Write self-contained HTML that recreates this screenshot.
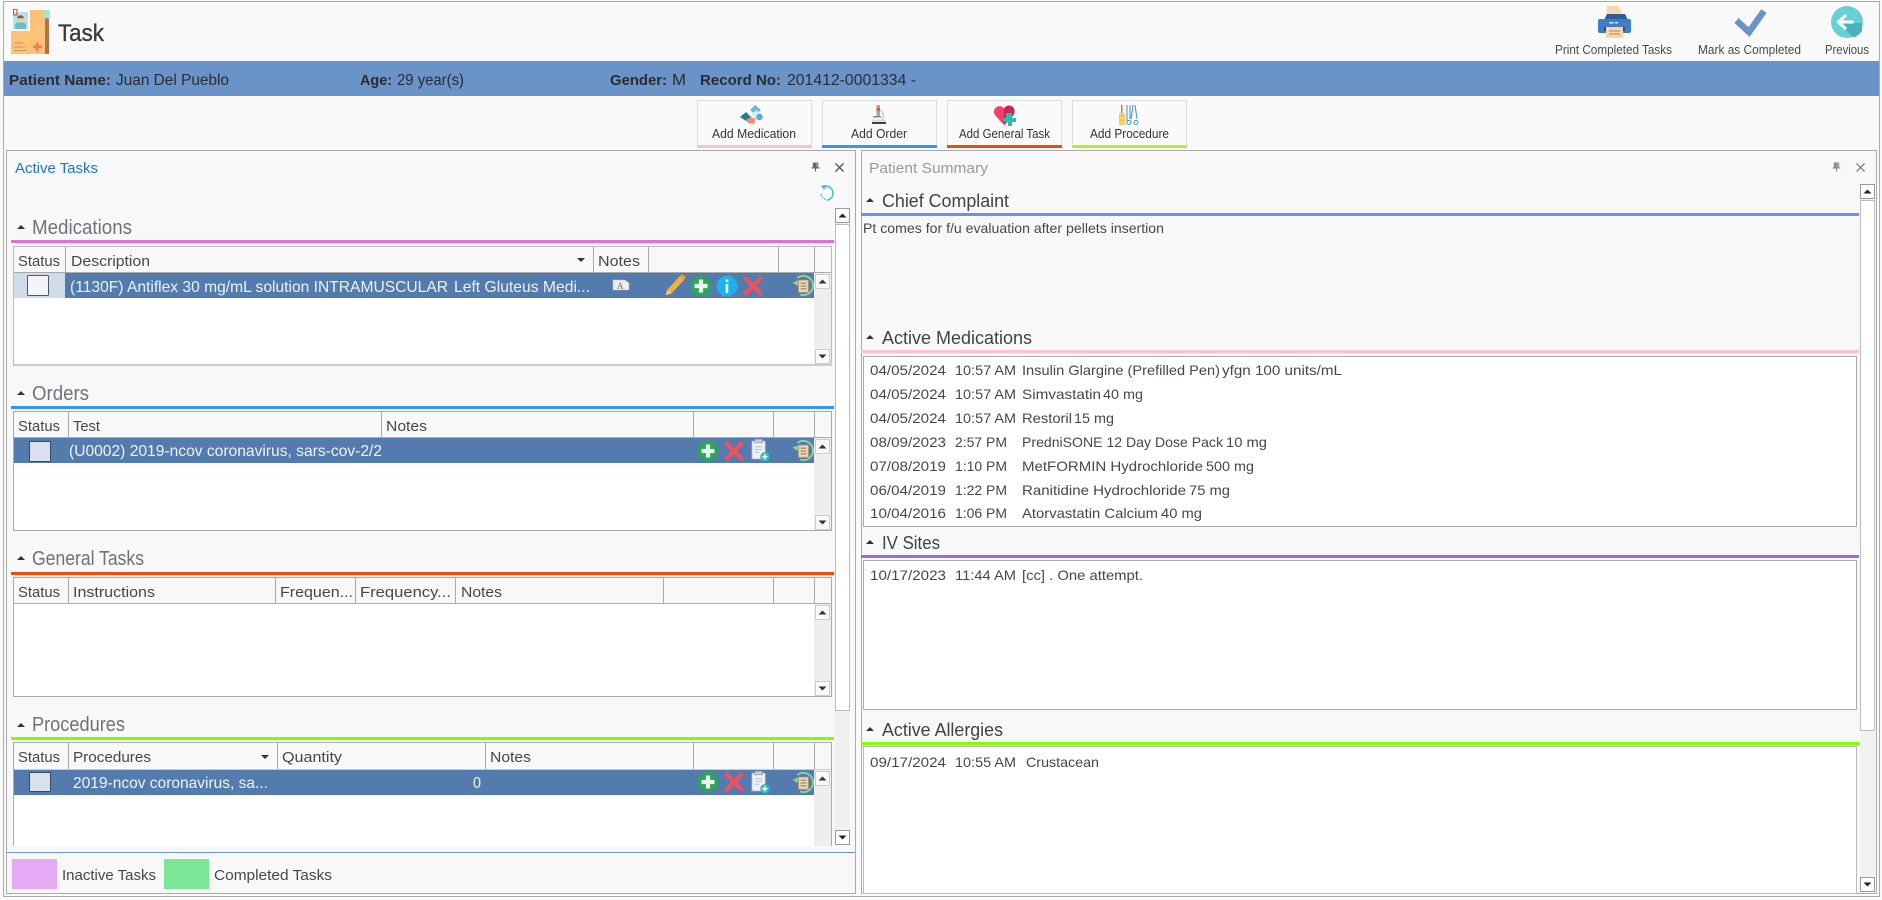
<!DOCTYPE html>
<html lang="en">
<head>
<meta charset="utf-8">
<title>Task</title>
<style>
html,body{margin:0;padding:0;background:#f9f9f9;width:1882px;height:900px;overflow:hidden}
svg{display:block;position:absolute;left:0;top:0}
text{font-family:"Liberation Sans",sans-serif;fill:#3d3d3d;font-size:15px;white-space:pre}
.b{font-weight:bold}
.sec{font-size:20px;fill:#6d7279}
.rs{font-size:18px;fill:#3f4347}
.g{font-size:15px;fill:#44484c}
.r{font-size:16px;fill:#eef3f9}
.s{font-size:14px;fill:#44484c}
.tb{font-size:12.5px;fill:#4a4a4a}
.bt{font-size:13px;fill:#333}
.l{stroke:#aaa;stroke-width:1;fill:none;shape-rendering:crispEdges}
.c{shape-rendering:crispEdges}
</style>
</head>
<body>
<svg width="1882" height="900" viewBox="0 0 1882 900" xmlns="http://www.w3.org/2000/svg">
<defs>
<symbol id="plus" viewBox="0 0 22 22"><circle cx="11" cy="11" r="10.5" fill="#2fa35c"/><path d="M11 4.5v13M4.500 11h13" stroke="#e8f5ee" stroke-width="4.200"/></symbol>
<symbol id="xx" viewBox="0 0 22 22"><path d="M2.500 2.500L19.500 19.500M19.500 2.500L2.500 19.500" stroke="#f2505f" stroke-width="4.200" fill="none"/></symbol>
<symbol id="info" viewBox="0 0 22 22"><circle cx="11" cy="11" r="10.500" fill="#1fb0ef"/><rect x="9.700" y="9" width="2.600" height="9" fill="#eaf7fd"/><rect x="9.700" y="4.500" width="2.600" height="2.600" fill="#eaf7fd"/></symbol>
<symbol id="hist" viewBox="0 0 24 24"><path d="M6.600 4.300A10 10 0 1 1 9.600 21.400" fill="none" stroke="#8fd68a" stroke-width="2"/><path d="M1.500 9L7.500 6.500 7 12.500z" fill="#8fd68a"/><rect x="8" y="6.500" width="10" height="12.500" fill="#f4d6a9" stroke="#c9a878" stroke-width=".8"/><path d="M10 9.500h6M10 12.500h6M10 15.500h6" stroke="#7a7a70" stroke-width="1"/></symbol>
<symbol id="clip" viewBox="0 0 20 24"><rect x="1" y="2" width="14" height="19" rx="1" fill="#eef1f5" stroke="#aab4c0" stroke-width=".8"/><rect x="4" y="0" width="8" height="4" fill="#c9ced6" stroke="#7f8791" stroke-width=".6"/><path d="M4 8h8M4 11h8M4 14h5" stroke="#c5ccd4" stroke-width="1.300"/><circle cx="14.500" cy="18.500" r="4.800" fill="#2cc2c6"/><path d="M14.500 15.800v5.400M11.800 18.500h5.400" stroke="#fff" stroke-width="1.500"/></symbol>
<symbol id="up" viewBox="0 0 15 15"><rect x=".5" y=".5" width="14" height="14" fill="#f9f9f9" stroke="#ccc"/><path d="M3.500 9.500L7.500 5.500 11.500 9.500z" fill="#333"/></symbol>
<symbol id="dn" viewBox="0 0 15 15"><rect x=".5" y=".5" width="14" height="14" fill="#f9f9f9" stroke="#ccc"/><path d="M3.500 5.500L7.500 9.500 11.500 5.500z" fill="#333"/></symbol>
<symbol id="oup" viewBox="0 0 15 15"><rect x=".5" y=".5" width="14" height="14" fill="#fff" stroke="#999"/><path d="M3.500 9.500L7.500 5.500 11.500 9.500z" fill="#222"/></symbol>
<symbol id="odn" viewBox="0 0 15 15"><rect x=".5" y=".5" width="14" height="14" fill="#fff" stroke="#999"/><path d="M3.500 5.500L7.500 9.500 11.500 5.500z" fill="#222"/></symbol>
<symbol id="pin" viewBox="0 0 10 10"><path d="M2 0h6v5.500H2zM0.500 5.500h9v1.200h-9zM4.400 6.500h1.200V10H4.400z" fill="#666"/><rect x="5.800" y="0.500" width="1.300" height="4.500" fill="#aaa"/></symbol>
<symbol id="cls" viewBox="0 0 10 10"><path d="M.5 .5L9.500 9.500M9.500 .5L.5 9.500" stroke="#444" stroke-width="1.300" fill="none"/></symbol>
</defs>

<!-- frame -->
<rect width="1882" height="900" fill="#f9f9f9"/>
<rect class="l" x="3.500" y="1.500" width="1876" height="895" stroke-width="1.500"/>

<!-- title -->
<rect x="11" y="10" width="38" height="44" fill="#fdc177"/>
<rect x="45" y="14" width="4" height="40" fill="#a9764a"/>
<path d="M44 10h6v10l-3-2-3 1z" fill="#a8e2dc"/>
<rect x="11" y="9" width="19" height="22" fill="#fff"/>
<rect x="13" y="12" width="15" height="17" fill="#aee6ea"/>
<circle cx="20.500" cy="19" r="3" fill="#f7cf9f"/><path d="M20.500 15.300a3.500 3.500 0 0 1 3.500 3h-7a3.500 3.500 0 0 1 3.500-3z" fill="#8a5a3a"/>
<path d="M15 29v-3.500a3 3 0 0 1 3-3h5a3 3 0 0 1 3 3V29z" fill="#6fbcc6"/>
<rect x="13.500" y="9.500" width="3.500" height="5.500" fill="none" stroke="#f0543c" stroke-width="1.200"/>
<path d="M14 43h9M14 47h11M14 50.500h12" stroke="#c69a5f" stroke-width="1" class="c"/>
<path d="M33 45.500h3v-3h2.500v3h3.500v2.500h-3.500v3H36v-3h-3z" fill="#f47a4c"/>
<text x="58" y="41" style="font-size:24px;fill:#3a3a3a;stroke:#3a3a3a;stroke-width:.35" textLength="46" lengthAdjust="spacingAndGlyphs">Task</text>

<!-- top-right actions -->
<path d="M1607 6h11l3 4v10h-14z" fill="#fbd6a8"/>
<path d="M1604 20l3-6h18l3 6z" fill="#2d5e96"/>
<rect x="1598" y="19" width="33" height="14" rx="2" fill="#3f7ec6"/>
<rect x="1604" y="27" width="21" height="4" fill="#234e80"/>
<rect x="1606" y="27" width="17" height="11" fill="#fbd6a8"/>
<path d="M1609 31h11M1609 34h11" stroke="#a58a63" stroke-width="1"/>
<rect x="1609" y="22" width="5" height="1.500" fill="#cfe0f3"/><rect x="1615" y="22" width="3" height="1.500" fill="#cfe0f3"/>
<text class="tb" x="1555" y="54" textLength="117" lengthAdjust="spacingAndGlyphs">Print Completed Tasks</text>
<path d="M1736.500 20.500L1749 32 1764 11" stroke="#6a94c8" stroke-width="6.500" fill="none"/>
<text class="tb" x="1698" y="54" textLength="103" lengthAdjust="spacingAndGlyphs">Mark as Completed</text>
<circle cx="1847" cy="22" r="16" fill="#66cfd8"/>
<path d="M1839 23l23 0-0 8a16 16 0 0 1-9 6.500z" fill="#4cb1be"/>
<path d="M1846 15l-7.500 7 7.500 7M1839.500 22h14" stroke="#fff" stroke-width="3" fill="none"/>
<text class="tb" x="1825" y="54" textLength="44" lengthAdjust="spacingAndGlyphs">Previous</text>

<!-- patient bar -->
<rect class="c" x="4" y="61" width="1875" height="35" fill="#6a93c7"/>
<g style="fill:#2f3033">
<text class="b" x="9" y="85" style="fill:#2b2c30" textLength="102" lengthAdjust="spacingAndGlyphs">Patient Name:</text>
<text x="116" y="85" style="font-size:15.500px;fill:#2b2c30" textLength="113" lengthAdjust="spacingAndGlyphs">Juan Del Pueblo</text>
<text class="b" x="360" y="85" style="fill:#2b2c30" textLength="32" lengthAdjust="spacingAndGlyphs">Age:</text>
<text x="397" y="85" style="font-size:15.500px;fill:#2b2c30" textLength="67" lengthAdjust="spacingAndGlyphs">29 year(s)</text>
<text class="b" x="610" y="85" style="fill:#2b2c30" textLength="57" lengthAdjust="spacingAndGlyphs">Gender:</text>
<text x="672" y="85" style="font-size:15.500px;fill:#2b2c30" textLength="14" lengthAdjust="spacingAndGlyphs">M</text>
<text class="b" x="700" y="85" style="fill:#2b2c30" textLength="81" lengthAdjust="spacingAndGlyphs">Record No:</text>
<text x="787" y="85" style="font-size:15.500px;fill:#2b2c30" textLength="129" lengthAdjust="spacingAndGlyphs">201412-0001334 -</text>
</g>

<!-- add buttons -->
<g class="c">
<rect x="697.500" y="100.500" width="114" height="47" fill="#fafafa" stroke="#ddd"/><rect x="697" y="145" width="115" height="3" fill="#f9c1cc"/>
<rect x="822.500" y="100.500" width="114" height="47" fill="#fafafa" stroke="#ddd"/><rect x="822" y="145" width="115" height="3" fill="#3a96f5"/>
<rect x="947.500" y="100.500" width="114" height="47" fill="#fafafa" stroke="#ddd"/><rect x="947" y="145" width="115" height="3" fill="#f2490b"/>
<rect x="1072.500" y="100.500" width="114" height="47" fill="#fafafa" stroke="#ddd"/><rect x="1072" y="145" width="115" height="3" fill="#aef22a"/>
</g>
<text class="bt" x="712" y="138" textLength="84" lengthAdjust="spacingAndGlyphs">Add Medication</text>
<text class="bt" x="851" y="138" textLength="56" lengthAdjust="spacingAndGlyphs">Add Order</text>
<text class="bt" x="959" y="138" textLength="91" lengthAdjust="spacingAndGlyphs">Add General Task</text>
<text class="bt" x="1090" y="138" textLength="79" lengthAdjust="spacingAndGlyphs">Add Procedure</text>
<!-- pills -->
<path d="M750 110l5-5 6 5-5 5z" fill="#6ab7e8"/><path d="M751 114l6-4 6 6-6 4z" fill="#cdecf3"/>
<path d="M746 112l5 5-5 4-6-4z" fill="#1f7f8c"/><path d="M751 117l5 2-2 5-6-1-2-3z" fill="#f08f6d"/><circle cx="759.500" cy="117" r="3.200" fill="#5ba6dd"/>
<!-- microscope -->
<rect x="872" y="122" width="14" height="2" fill="#444"/><rect x="872" y="119.500" width="14" height="2.500" fill="#e8dcd3"/>
<path d="M880 110a7 7 0 0 1 2 10" stroke="#c9c9c9" stroke-width="1.500" fill="none"/>
<rect x="876.500" y="105" width="3.500" height="11" fill="#a8a8a8"/><rect x="876.500" y="108" width="3.500" height="3" fill="#d8553f"/>
<rect x="873" y="116" width="8" height="1.500" fill="#888"/>
<!-- heart -->
<path d="M1004 125l-9-10a5.500 5.500 0 0 1 9-6.500a5.500 5.500 0 0 1 10 5l-3 5z" fill="#f43f6b"/>
<path d="M1004 109a5.500 5.500 0 0 1 10 5l-3 5-7 6z" fill="#c7245f"/>
<path d="M1006 113h4v-0h2v5h4v4h-4v4h-4v-4h-4v-4h2z" fill="#29bfae"/>
<!-- procedure -->
<rect x="1121" y="105" width="1.500" height="8" fill="#e46a6a"/><rect x="1119" y="113" width="6" height="12" fill="#f7d06a"/>
<path d="M1119 116h6M1119 120h6" stroke="#e3b44a" stroke-width=".8"/>
<path d="M1127 105v16M1130 105v14M1133 105l-2 14M1135 105l2 14" stroke="#3f93c9" stroke-width="1" fill="none"/>
<circle cx="1129" cy="122.500" r="2" fill="none" stroke="#3f93c9"/><circle cx="1136" cy="122.500" r="2" fill="none" stroke="#3f93c9"/>

<!-- left panel -->
<rect class="l" x="6.500" y="150.500" width="849" height="743" style="fill:#f8f8f8"/>
<text x="15" y="173" style="font-size:14.500px;fill:#1d76c8" textLength="83" lengthAdjust="spacingAndGlyphs">Active Tasks</text>
<use href="#pin" x="811" y="162" width="9" height="10"/>
<use href="#cls" x="835" y="163" width="9" height="9"/>
<path d="M824 186.500A7 7 0 1 1 828 200" stroke="#4db4f0" stroke-width="1.500" fill="none"/>
<path d="M828 200A7 7 0 0 1 821 193" stroke="#4db4f0" stroke-width="1.500" fill="none" stroke-dasharray="1.500 1.200"/>
<path d="M821 185.500l6-.5-3 5z" fill="#4db4f0"/>

<!-- left outer scroll -->
<rect class="c" x="835" y="208" width="15" height="637" fill="#f0f0f0"/>
<rect x="835.500" y="224.500" width="14" height="486" fill="#fff" stroke="#bbb" class="c"/>
<use href="#oup" x="835" y="208" width="15" height="15"/>
<use href="#odn" x="835" y="830" width="15" height="15"/>

<!-- Medications -->
<path d="M17 229l4-4 4 4z" fill="#333"/>
<text class="sec" x="32" y="234" textLength="100" lengthAdjust="spacingAndGlyphs">Medications</text>
<rect class="c" x="11" y="240" width="823" height="3" fill="#e070d8"/>
<rect x="13.500" y="246.500" width="818" height="119" fill="#fff" stroke="#bbb" class="c"/>
<rect class="c" x="14" y="364" width="818" height="2" fill="#ccc"/>
<rect class="c" x="14" y="247" width="817" height="25" fill="#f8f8f8"/>
<path class="l" d="M65.500 247v25M593.500 247v25M648.500 247v25M778.500 247v25M814.500 247v25"/>
<rect class="c" x="14" y="272" width="817" height="1" fill="#aaa"/>
<rect class="c" x="814" y="273" width="17" height="91" fill="#eee"/>
<text class="g" x="18" y="266" textLength="42" lengthAdjust="spacingAndGlyphs">Status</text>
<text class="g" x="71" y="266" textLength="79" lengthAdjust="spacingAndGlyphs">Description</text>
<path d="M577 258h8l-4 4z" fill="#333"/>
<text class="g" x="598" y="266" textLength="42" lengthAdjust="spacingAndGlyphs">Notes</text>
<rect class="c" x="14" y="273" width="51" height="25" fill="#cfdcea"/>
<rect class="c" x="65" y="273" width="749" height="25" fill="#537bae"/>
<rect x="27.500" y="275.500" width="21" height="20" rx="1" fill="#f3f5f8" stroke="#555"/>
<text class="r" x="70" y="292" textLength="378" lengthAdjust="spacingAndGlyphs">(1130F) Antiflex 30 mg/mL solution INTRAMUSCULAR</text>
<text class="r" x="454" y="292" textLength="136" lengthAdjust="spacingAndGlyphs">Left Gluteus Medi...</text>
<path d="M613 280h12l4 3v7h-16z" fill="#eee" stroke="#bbb" stroke-width=".6"/>
<text x="617" y="289" style="font-family:'Liberation Serif',serif;font-size:9px;fill:#777">A</text>
<path d="M666 295l1-5 13-14 4 4-13 14z" fill="#f2b33d"/><path d="M666 295l1-5 4 3z" fill="#f0c9a0"/><path d="M680 276l2-2 4 3-2 3z" fill="#e89a2c"/>
<use href="#plus" x="690" y="275" width="22" height="22"/>
<use href="#info" x="716" y="275" width="22" height="22"/>
<use href="#xx" x="742" y="275" width="22" height="22"/>
<use href="#hist" x="791" y="274" width="23" height="23"/>
<use href="#up" x="815" y="274" width="15" height="15"/>
<use href="#dn" x="815" y="349" width="15" height="15"/>

<!-- Orders -->
<path d="M17 395l4-4 4 4z" fill="#333"/>
<text class="sec" x="32" y="400" textLength="57" lengthAdjust="spacingAndGlyphs">Orders</text>
<rect class="c" x="11" y="406" width="823" height="3" fill="#3a96f5"/>
<rect x="13.500" y="411.500" width="818" height="119" fill="#fff" stroke="#aaa" class="c"/>
<rect class="c" x="14" y="412" width="817" height="25" fill="#f8f8f8"/>
<path class="l" d="M68.500 412v25M381.500 412v25M693.500 412v25M773.500 412v25M814.500 412v25"/>
<rect class="c" x="14" y="437" width="817" height="1" fill="#aaa"/>
<rect class="c" x="814" y="438" width="17" height="92" fill="#eee"/>
<text class="g" x="18" y="431" textLength="42" lengthAdjust="spacingAndGlyphs">Status</text>
<text class="g" x="73" y="431" textLength="27" lengthAdjust="spacingAndGlyphs">Test</text>
<text class="g" x="386" y="431" textLength="41" lengthAdjust="spacingAndGlyphs">Notes</text>
<rect class="c" x="14" y="438" width="800" height="25" fill="#537bae"/>
<rect x="29.500" y="441.500" width="21" height="20" rx="1" fill="#d9e2ec" stroke="#3c4a5c"/>
<text class="r" x="69" y="456" textLength="313" lengthAdjust="spacingAndGlyphs">(U0002) 2019-ncov coronavirus, sars-cov-2/2</text>
<use href="#plus" x="697" y="440" width="22" height="22"/>
<use href="#xx" x="723" y="440" width="22" height="22"/>
<use href="#clip" x="751" y="439" width="19" height="23"/>
<use href="#hist" x="791" y="439" width="23" height="23"/>
<use href="#up" x="815" y="439" width="15" height="15"/>
<use href="#dn" x="815" y="515" width="15" height="15"/>

<!-- General Tasks -->
<path d="M17 560l4-4 4 4z" fill="#333"/>
<text class="sec" x="32" y="565" textLength="112" lengthAdjust="spacingAndGlyphs">General Tasks</text>
<rect class="c" x="11" y="572" width="823" height="3" fill="#f2490b"/>
<rect x="13.500" y="577.500" width="818" height="119" fill="#fff" stroke="#aaa" class="c"/>
<rect class="c" x="14" y="578" width="817" height="25" fill="#f8f8f8"/>
<path class="l" d="M68.500 578v25M275.500 578v25M355.500 578v25M455.500 578v25M663.500 578v25M773.500 578v25M814.500 578v25"/>
<rect class="c" x="14" y="603" width="817" height="1" fill="#aaa"/>
<rect class="c" x="814" y="604" width="17" height="92" fill="#eee"/>
<text class="g" x="18" y="597" textLength="42" lengthAdjust="spacingAndGlyphs">Status</text>
<text class="g" x="73" y="597" textLength="82" lengthAdjust="spacingAndGlyphs">Instructions</text>
<text class="g" x="280" y="597" textLength="73" lengthAdjust="spacingAndGlyphs">Frequen...</text>
<text class="g" x="360" y="597" textLength="91" lengthAdjust="spacingAndGlyphs">Frequency...</text>
<text class="g" x="461" y="597" textLength="41" lengthAdjust="spacingAndGlyphs">Notes</text>
<use href="#up" x="815" y="605" width="15" height="15"/>
<use href="#dn" x="815" y="681" width="15" height="15"/>

<!-- Procedures -->
<path d="M17 727l4-4 4 4z" fill="#333"/>
<text class="sec" x="32" y="731" textLength="93" lengthAdjust="spacingAndGlyphs">Procedures</text>
<rect class="c" x="11" y="737" width="823" height="3" fill="#80ff00"/>
<rect class="c" x="13" y="742" width="819" height="104" fill="#fff"/>
<path class="l" d="M13.500 846V742.500H831.500V846"/>
<rect class="c" x="14" y="743" width="817" height="26" fill="#f8f8f8"/>
<path class="l" d="M68.500 743v26M277.500 743v26M485.500 743v26M693.500 743v26M773.500 743v26M814.500 743v26"/>
<rect class="c" x="14" y="769" width="817" height="1" fill="#ccc"/>
<rect class="c" x="814" y="770" width="17" height="76" fill="#eee"/>
<text class="g" x="18" y="762" textLength="42" lengthAdjust="spacingAndGlyphs">Status</text>
<text class="g" x="73" y="762" textLength="78" lengthAdjust="spacingAndGlyphs">Procedures</text>
<path d="M261 755h8l-4 4z" fill="#333"/>
<text class="g" x="282" y="762" textLength="60" lengthAdjust="spacingAndGlyphs">Quantity</text>
<text class="g" x="490" y="762" textLength="41" lengthAdjust="spacingAndGlyphs">Notes</text>
<rect class="c" x="14" y="770" width="800" height="25" fill="#537bae"/>
<rect x="29.500" y="772.500" width="21" height="19" rx="1" fill="#d9e2ec" stroke="#3c4a5c"/>
<text class="r" x="73" y="788" textLength="195" lengthAdjust="spacingAndGlyphs">2019-ncov coronavirus, sa...</text>
<text class="r" x="473" y="788" textLength="8" lengthAdjust="spacingAndGlyphs">0</text>
<use href="#plus" x="697" y="771" width="22" height="22"/>
<use href="#xx" x="723" y="771" width="22" height="22"/>
<use href="#clip" x="751" y="771" width="19" height="23"/>
<use href="#hist" x="791" y="771" width="23" height="23"/>
<use href="#up" x="815" y="771" width="15" height="15"/>

<!-- legend -->
<rect class="c" x="7" y="852" width="848" height="1" fill="#6a97c9"/>
<rect class="c" x="12" y="859" width="45" height="30" fill="#e5aaf5"/>
<text class="g" x="62" y="880" textLength="94" lengthAdjust="spacingAndGlyphs">Inactive Tasks</text>
<rect class="c" x="164" y="859" width="45" height="30" fill="#7be695"/>
<text class="g" x="214" y="880" textLength="118" lengthAdjust="spacingAndGlyphs">Completed Tasks</text>

<!-- right panel -->
<rect class="l" x="861.500" y="150.500" width="1015" height="743" style="fill:#f8f8f8"/>
<text x="869" y="173" style="font-size:14.500px;fill:#9a9a9a" textLength="119" lengthAdjust="spacingAndGlyphs">Patient Summary</text>
<use href="#pin" x="1832" y="162" width="9" height="10" opacity=".75"/>
<use href="#cls" x="1856" y="163" width="9" height="9" opacity=".7"/>
<rect class="c" x="1860" y="184" width="15" height="708" fill="#f2f2f2"/>
<rect x="1860.500" y="200.500" width="14" height="530" fill="#fff" stroke="#bbb" class="c"/>
<use href="#oup" x="1860" y="184" width="15" height="15"/>
<use href="#odn" x="1860" y="877" width="15" height="15"/>

<path d="M866 202l4-4 4 4z" fill="#333"/>
<text class="rs" x="882" y="207" textLength="127" lengthAdjust="spacingAndGlyphs">Chief Complaint</text>
<rect class="c" x="861" y="213" width="998" height="3" fill="#6495ed"/>
<text class="s" x="863" y="233" textLength="301" lengthAdjust="spacingAndGlyphs">Pt comes for f/u evaluation after pellets insertion</text>

<path d="M866 339l4-4 4 4z" fill="#333"/>
<text class="rs" x="882" y="344" textLength="150" lengthAdjust="spacingAndGlyphs">Active Medications</text>
<rect class="c" x="861" y="350" width="998" height="3" fill="#ffc0cb"/>
<rect x="863.500" y="356.500" width="993" height="170" fill="#fff" stroke="#aaa" class="c"/>
<text class="s" x="870" y="375" textLength="76" lengthAdjust="spacingAndGlyphs">04/05/2024</text><text class="s" x="955" y="375" textLength="61" lengthAdjust="spacingAndGlyphs">10:57 AM</text><text class="s" x="1022" y="375" textLength="198" lengthAdjust="spacingAndGlyphs">Insulin Glargine (Prefilled Pen)</text><text class="s" x="1222" y="375" textLength="120" lengthAdjust="spacingAndGlyphs">yfgn 100 units/mL</text>
<text class="s" x="870" y="399" textLength="76" lengthAdjust="spacingAndGlyphs">04/05/2024</text><text class="s" x="955" y="399" textLength="61" lengthAdjust="spacingAndGlyphs">10:57 AM</text><text class="s" x="1022" y="399" textLength="79" lengthAdjust="spacingAndGlyphs">Simvastatin</text><text class="s" x="1103" y="399" textLength="40" lengthAdjust="spacingAndGlyphs">40 mg</text>
<text class="s" x="870" y="423" textLength="76" lengthAdjust="spacingAndGlyphs">04/05/2024</text><text class="s" x="955" y="423" textLength="61" lengthAdjust="spacingAndGlyphs">10:57 AM</text><text class="s" x="1022" y="423" textLength="50" lengthAdjust="spacingAndGlyphs">Restoril</text><text class="s" x="1074" y="423" textLength="40" lengthAdjust="spacingAndGlyphs">15 mg</text>
<text class="s" x="870" y="447" textLength="76" lengthAdjust="spacingAndGlyphs">08/09/2023</text><text class="s" x="955" y="447" textLength="52" lengthAdjust="spacingAndGlyphs">2:57 PM</text><text class="s" x="1022" y="447" textLength="201" lengthAdjust="spacingAndGlyphs">PredniSONE 12 Day Dose Pack</text><text class="s" x="1226" y="447" textLength="41" lengthAdjust="spacingAndGlyphs">10 mg</text>
<text class="s" x="870" y="471" textLength="76" lengthAdjust="spacingAndGlyphs">07/08/2019</text><text class="s" x="955" y="471" textLength="52" lengthAdjust="spacingAndGlyphs">1:10 PM</text><text class="s" x="1022" y="471" textLength="181" lengthAdjust="spacingAndGlyphs">MetFORMIN Hydrochloride</text><text class="s" x="1206" y="471" textLength="48" lengthAdjust="spacingAndGlyphs">500 mg</text>
<text class="s" x="870" y="495" textLength="76" lengthAdjust="spacingAndGlyphs">06/04/2019</text><text class="s" x="955" y="495" textLength="52" lengthAdjust="spacingAndGlyphs">1:22 PM</text><text class="s" x="1022" y="495" textLength="164" lengthAdjust="spacingAndGlyphs">Ranitidine Hydrochloride</text><text class="s" x="1189" y="495" textLength="41" lengthAdjust="spacingAndGlyphs">75 mg</text>
<text class="s" x="870" y="518" textLength="76" lengthAdjust="spacingAndGlyphs">10/04/2016</text><text class="s" x="955" y="518" textLength="52" lengthAdjust="spacingAndGlyphs">1:06 PM</text><text class="s" x="1022" y="518" textLength="136" lengthAdjust="spacingAndGlyphs">Atorvastatin Calcium</text><text class="s" x="1161" y="518" textLength="41" lengthAdjust="spacingAndGlyphs">40 mg</text>

<path d="M866 544l4-4 4 4z" fill="#333"/>
<text class="rs" x="882" y="549" textLength="58" lengthAdjust="spacingAndGlyphs">IV Sites</text>
<rect class="c" x="861" y="555" width="998" height="3" fill="#9370db"/>
<rect x="863.500" y="560.500" width="993" height="149" fill="#fff" stroke="#aaa" class="c"/>
<text class="s" x="870" y="580" textLength="76" lengthAdjust="spacingAndGlyphs">10/17/2023</text><text class="s" x="955" y="580" textLength="61" lengthAdjust="spacingAndGlyphs">11:44 AM</text><text class="s" x="1022" y="580" textLength="121" lengthAdjust="spacingAndGlyphs">[cc] . One attempt.</text>

<path d="M866 731l4-4 4 4z" fill="#333"/>
<text class="rs" x="882" y="736" textLength="121" lengthAdjust="spacingAndGlyphs">Active Allergies</text>
<rect class="c" x="861" y="742" width="998" height="3" fill="#7fff00"/>
<rect x="863.500" y="746.500" width="993" height="147" fill="#fff" stroke="#bbb" class="c"/>
<text class="s" x="870" y="767" textLength="76" lengthAdjust="spacingAndGlyphs">09/17/2024</text><text class="s" x="955" y="767" textLength="61" lengthAdjust="spacingAndGlyphs">10:55 AM</text><text class="s" x="1026" y="767" textLength="73" lengthAdjust="spacingAndGlyphs">Crustacean</text>
</svg>
</body>
</html>
